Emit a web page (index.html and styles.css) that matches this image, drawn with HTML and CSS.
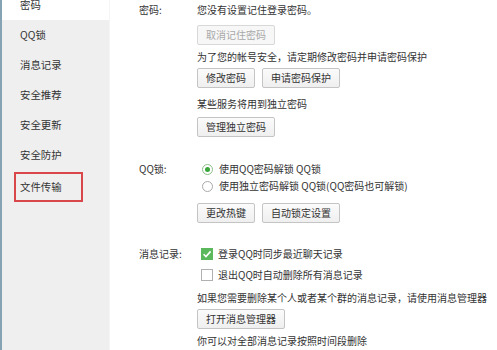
FILE: index.html
```html
<!DOCTYPE html>
<html lang="zh-CN">
<head>
<meta charset="utf-8">
<link rel="stylesheet" href="styles.css">
</head>
<body>
<div class="page">
  <nav class="sidebar">
    <ul class="menu">
      <li class="item active">密码</li>
      <li class="item">QQ锁</li>
      <li class="item">消息记录</li>
      <li class="item">安全推荐</li>
      <li class="item">安全更新</li>
      <li class="item">安全防护</li>
      <li class="item"><span class="mark">文件传输</span></li>
    </ul>
  </nav>
  <main class="main">
    <section class="sec sec-pwd">
      <div class="label">密码:</div>
      <div class="body">
        <p class="txt">您没有设置记住登录密码。</p>
        <div class="row m7"><button class="btn disabled">取消记住密码</button></div>
        <p class="txt m4">为了您的帐号安全，请定期修改密码并申请密码保护</p>
        <div class="row m3"><button class="btn">修改密码</button><button class="btn">申请密码保护</button></div>
        <p class="txt m8">某些服务将用到独立密码</p>
        <div class="row m5"><button class="btn">管理独立密码</button></div>
      </div>
    </section>
    <section class="sec sec-lock">
      <div class="label">QQ锁:</div>
      <div class="body">
        <div class="opt"><span class="radio on"></span>使用QQ密码解锁 QQ锁</div>
        <div class="opt m1"><span class="radio"></span>使用独立密码解锁 QQ锁(QQ密码也可解锁)</div>
        <div class="row m9"><button class="btn">更改热键</button><button class="btn">自动锁定设置</button></div>
      </div>
    </section>
    <section class="sec sec-msg">
      <div class="label">消息记录:</div>
      <div class="body">
        <div class="opt"><span class="check on"><svg viewBox="0 0 12 12" width="12" height="12"><path d="M2.6 6.2 L5 8.6 L9.6 3.4" fill="none" stroke="#fff" stroke-width="1.6"/></svg></span>登录QQ时同步最近聊天记录</div>
        <div class="opt m5"><span class="check"></span>退出QQ时自动删除所有消息记录</div>
        <p class="txt m7">如果您需要删除某个人或者某个群的消息记录，请使用消息管理器</p>
        <div class="row m3"><button class="btn">打开消息管理器</button></div>
        <p class="txt m4">你可以对全部消息记录按照时间段删除</p>
      </div>
    </section>
  </main>
</div>
</body>
</html>
```

FILE: styles.css
```css
* { box-sizing: border-box; }
html, body { margin: 0; padding: 0; background: #fff; }
body {
  font-family: "Noto Sans CJK SC", "Microsoft YaHei", sans-serif;
  font-size: 10px;
  color: #333;
  overflow: hidden;
  height: 350px;
}
.page {
  display: flex;
  height: 350px;
  border-left: 2px solid #86a3b4;
}
.sidebar {
  width: 108px;
  flex: none;
  background: #efefef;
  border-right: 1px solid #f5f5f5;
}
.menu {
  list-style: none;
  margin: -10px 0 0 0;
  padding: 0;
  font-size: 10.4px;
}
.item {
  height: 30px;
  line-height: 30px;
  padding-left: 18px;
  color: #333;
}
.item.active { background: #fff; }
.mark {
  display: inline-block;
  margin-left: -6px;
  margin-top: 2px;
  width: 69px;
  height: 30px;
  line-height: 26px;
  padding-left: 4px;
  border: 2px solid #d9474b;
}
.main {
  flex: 1;
  padding-left: 29px;
}
.sec {
  display: grid;
  grid-template-columns: 58px 1fr;
}
.label { line-height: 16px; }
.sec-pwd { padding-top: 2px; }
.sec-lock { margin-top: 24px; }
.sec-msg { margin-top: 23px; }
.body { display: flex; flex-direction: column; align-items: flex-start; }
.txt { margin: 0; line-height: 16px; white-space: nowrap; }
.row { display: flex; gap: 7px; }
.m1 { margin-top: 1px; }
.m3 { margin-top: 3px; }
.m4 { margin-top: 4px; }
.m5 { margin-top: 5px; }
.m7 { margin-top: 7px; }
.m8 { margin-top: 8px; }
.m9 { margin-top: 9px; }
.btn {
  font: inherit;
  color: #333;
  height: 20px;
  padding: 0 8px;
  border: 1px solid #c4c4c4;
  border-radius: 2px;
  background: linear-gradient(#fbfbfb, #efefef);
  line-height: 18px;
  white-space: nowrap;
}
.btn.disabled { color: #a8a8a8; border-color: #d8d8d8; background: #f7f7f7; }
.opt {
  display: flex;
  align-items: center;
  height: 16px;
  line-height: 16px;
  white-space: nowrap;
}
.radio {
  width: 11px;
  height: 11px;
  border: 1px solid #a9a9a9;
  border-radius: 50%;
  margin: 0 6px 0 5px;
  background: #fff;
  display: flex;
  align-items: center;
  justify-content: center;
}
.radio.on { border-color: #8cbf8c; }
.radio.on::after {
  content: "";
  width: 5px;
  height: 5px;
  border-radius: 50%;
  background: #3aa53a;
}
.check {
  width: 12px;
  height: 12px;
  border: 1px solid #b0b0b0;
  margin: 0 5px 0 4px;
  background: #fff;
  display: flex;
}
.check.on { border: none; background: #5cb85c; }
```
